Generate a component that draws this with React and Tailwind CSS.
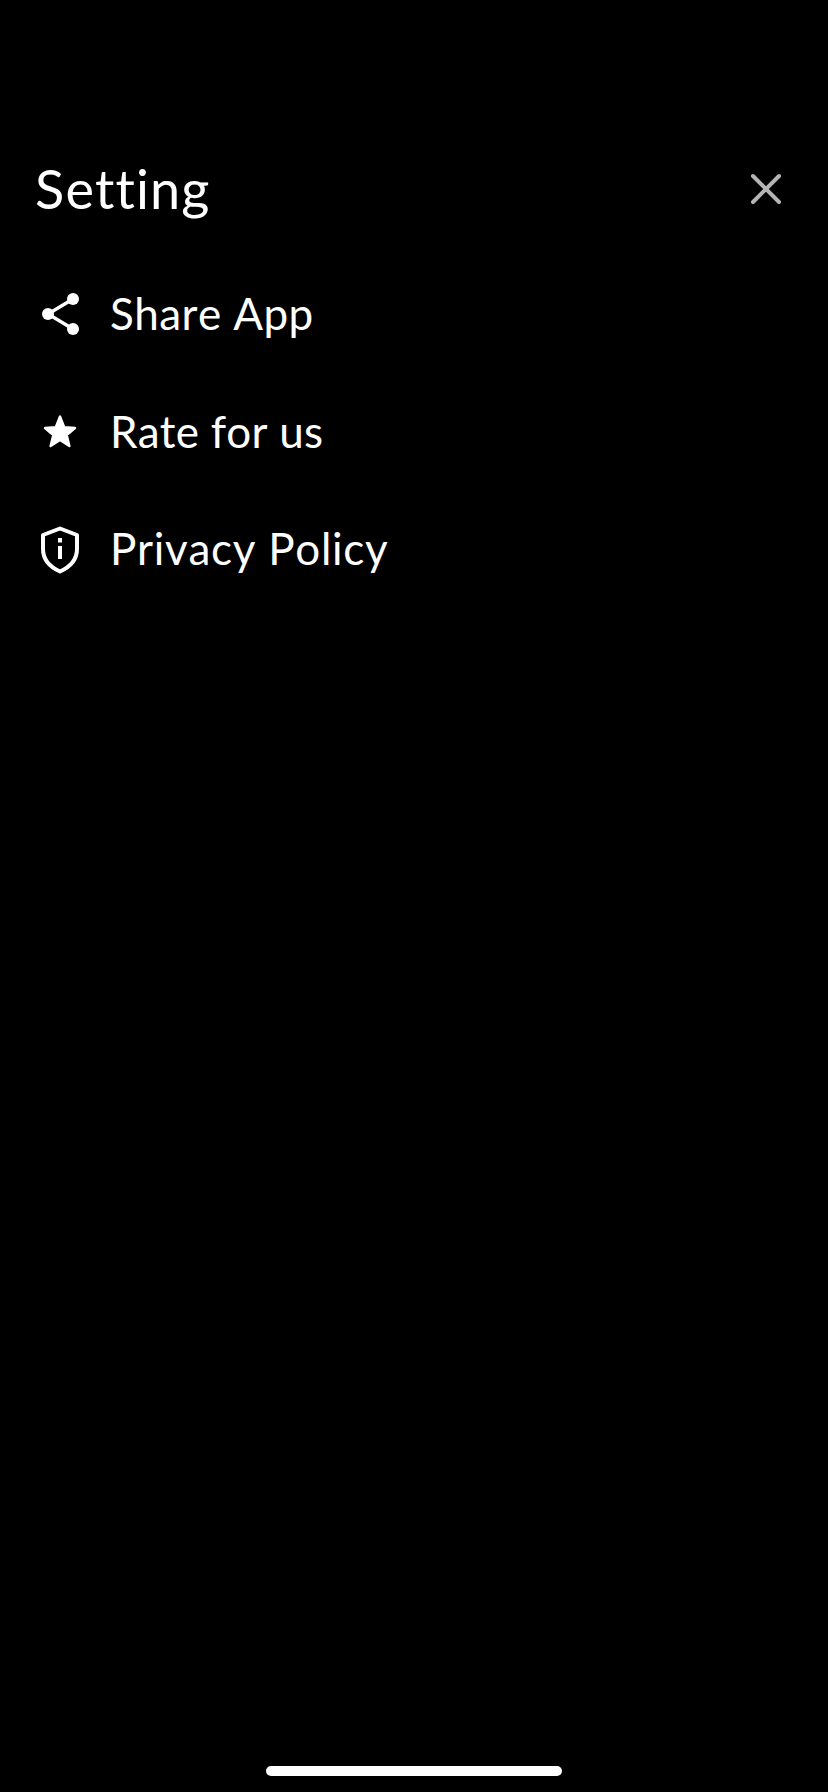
import React from "react";

function ShareIcon() {
  return (
    <svg width="44" height="44" viewBox="0 -1 44 44" fill="none">
      <path d="M35 7 10 22l25 15" stroke="#fff" strokeWidth="3.4" />
      <circle cx="35" cy="7" r="6" fill="#fff" />
      <circle cx="10" cy="22" r="6" fill="#fff" />
      <circle cx="35" cy="37" r="6" fill="#fff" />
    </svg>
  );
}

function StarIcon() {
  return (
    <svg width="44" height="44" viewBox="0 0 44 44" fill="#fff" stroke="#fff" strokeWidth="2.4" strokeLinejoin="round">
      <path d="M22 7.5 26.2 18.2 37 19 28.7 26 31.4 37 22 31 12.6 37 15.3 26 7 19 17.8 18.2Z" />
    </svg>
  );
}

function ShieldIcon() {
  return (
    <svg width="44" height="52" viewBox="0 -2 44 52" fill="none">
      <path d="M22 4.5 39 11v14c0 10.500-7 18-17 22.500C12 43 5 35.500 5 25V11Z" stroke="#fff" strokeWidth="4" strokeLinejoin="round" />
      <rect x="20" y="14" width="4" height="4.500" fill="#fff" />
      <rect x="20" y="22" width="4" height="13" fill="#fff" />
    </svg>
  );
}

const rows = [
  { label: "Share App", icon: <ShareIcon />, tracking: "tracking-[0.4px]" },
  { label: "Rate for us", icon: <StarIcon />, tracking: "tracking-[0.2px]" },
  { label: "Privacy Policy", icon: <ShieldIcon />, tracking: "tracking-[0.7px]" },
];

export default function App() {
  return (
    <div className="relative h-[1792px] w-[828px] overflow-hidden bg-black text-white font-['Lato',sans-serif] [font-variant-ligatures:none] [font-kerning:none]">
      <div className="flex items-center justify-between pl-[35px] pr-[44px] pt-[155px]">
        <h1 className="text-[54px] leading-[68px] font-normal tracking-[1.1px]">Setting</h1>
        <svg width="36" height="36" viewBox="0 0 36 36" fill="none" stroke="#b4b4b4" strokeWidth="4" strokeLinecap="round">
          <path d="M5 5l26 26M31 5 5 31" />
        </svg>
      </div>
      <div className="mt-[60px] flex flex-col gap-[57.500px] pl-[38px]">
        {rows.map((row) => (
          <div key={row.label} className="flex h-[60px] items-center">
            <div className="flex w-[44px] justify-center">{row.icon}</div>
            <span className={`ml-[28px] text-[44px] leading-[60px] ${row.tracking}`}>{row.label}</span>
          </div>
        ))}
      </div>
      <div className="absolute bottom-[16px] left-[266px] h-[10px] w-[296px] rounded-full bg-white" />
    </div>
  );
}
